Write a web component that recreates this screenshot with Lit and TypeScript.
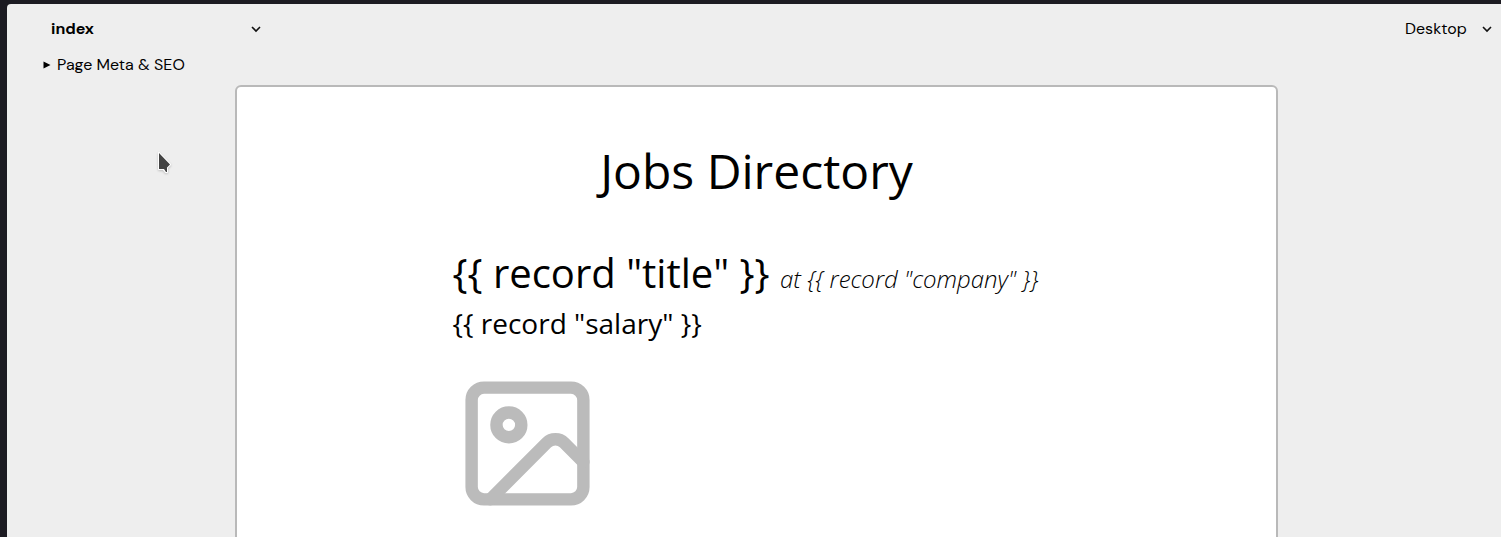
import { LitElement, html, css } from "lit";
import { customElement } from "lit/decorators.js";

@customElement("app-root")
export class AppRoot extends LitElement {
  static styles = css`
    :host {
      display: block;
      box-sizing: border-box;
      height: 100vh;
      overflow: hidden;
      padding: 4px 0 0 7px;
      background: #1c1b22;
      color: #000;
      font: 16px/24px "DM Sans", Inter, sans-serif;
    }
    .shell {
      box-sizing: border-box;
      min-height: 100%;
      background: #eee;
      border-top-left-radius: 4px;
      position: relative;
    }
    .bar {
      display: flex;
      justify-content: space-between;
      padding: 12px 8px 0 36px;
    }
    .picker {
      position: relative;
      display: flex;
      align-items: center;
    }
    .picker svg {
      position: absolute;
      right: 1px;
      pointer-events: none;
    }
    select {
      appearance: none;
      border: 0;
      background: transparent;
      color: inherit;
      font: inherit;
      padding: 0 8px;
      height: 26px;
      margin: 0;
    }
    .page select {
      width: 219px;
      font-weight: 700;
    }
    .device select {
      width: 96px;
    }
    summary {
      display: flex;
      align-items: center;
      gap: 6px;
      width: max-content;
      padding: 11px 0 0 36px;
      list-style: none;
    }
    .stage {
      padding: 8px 0 0 5px;
    }
    .canvas {
      box-sizing: border-box;
      max-width: 1043px;
      min-height: 460px;
      margin: 0 auto;
      padding: 48px 24px;
      border: 2px solid #b9b9b9;
      border-radius: 6px;
      background: #fff;
      font-family: "Open Sans", "Noto Sans", sans-serif;
    }
    .content {
      max-width: 608px;
      margin: 0 auto;
    }
    h1 {
      margin: 0;
      font-size: 48px;
      line-height: 72px;
      font-weight: 400;
      text-align: center;
    }
    h2 {
      margin: 36px 0 0;
      font-size: 40px;
      line-height: 60px;
      font-weight: 400;
      white-space: nowrap;
    }
    h2 small {
      font-size: 24px;
      font-style: italic;
      font-weight: 300;
    }
    h3 {
      margin: 0;
      font-size: 28px;
      line-height: 28px;
      font-weight: 400;
    }
    .photo {
      display: block;
      margin-top: 32px;
    }
    .pointer {
      position: absolute;
      left: 149px;
      top: 146px;
      filter: drop-shadow(0 1px 1px rgb(0 0 0 / 20%));
    }
  `;

  private chevron() {
    return html`<svg width="10" height="8" viewBox="0 0 10 8" fill="none" stroke="#111" stroke-width="1.6" aria-hidden="true">
      <path d="M1 2l4 4 4-4" />
    </svg>`;
  }

  render() {
    return html`
      <div class="shell">
        <header class="bar">
          <div class="picker page">
            <select aria-label="Page"><option>index</option></select>
            ${this.chevron()}
          </div>
          <div class="picker device">
            <select aria-label="Preview size"><option>Desktop</option></select>
            ${this.chevron()}
          </div>
        </header>
        <details>
          <summary>
            <svg width="8" height="8" viewBox="0 0 8 8" aria-hidden="true"><path d="M0.500 0.500L7.500 4L0.500 7.500z" /></svg>
            Page Meta &amp; SEO
          </summary>
        </details>
        <main class="stage">
          <article class="canvas">
            <div class="content">
              <h1>Jobs Directory</h1>
              <h2>{{ record "title" }} <small>at {{ record "company" }}</small></h2>
              <h3>{{ record "salary" }}</h3>
              <svg class="photo" width="149" height="149" viewBox="0 0 24 24" fill="none" stroke="#bbb" stroke-width="2" stroke-linecap="round" stroke-linejoin="round" role="img" aria-label="Image placeholder">
                <rect x="3" y="3" width="18" height="18" rx="2" />
                <circle cx="9" cy="9" r="2" />
                <path d="m21 15-3.086-3.086a2 2 0 0 0-2.828 0L6 21" />
              </svg>
            </div>
          </article>
        </main>
        <svg class="pointer" width="17" height="25" viewBox="0 0 17 25" aria-hidden="true">
          <path d="M3 3v16h4.500l2.500 3h1v-4.500l3-3z" fill="#fff" stroke="#fff" stroke-width="2" stroke-linejoin="round" />
          <path d="M3 3v16h5l2 3h1v-4.500l3-3z" fill="#444" />
        </svg>
      </div>
    `;
  }
}
